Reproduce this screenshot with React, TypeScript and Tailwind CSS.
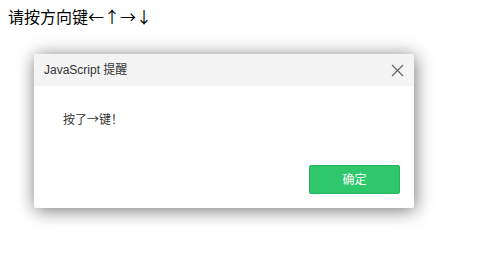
const App = () => {
    return (
        <div className="min-h-[266px] w-[485px] bg-white font-['Liberation_Sans','Noto_Sans_CJK_SC',sans-serif]">
            <div className="pl-2 pt-[6px] text-[16px] leading-[20px] text-black font-['Noto_Sans_CJK_SC',sans-serif]">
                请按方向键←↑→↓
            </div>
            <div className="ml-[34px] mt-[28px] w-[380px] h-[154px] rounded-[2px] bg-white shadow-[1px_2px_18px_rgba(0,0,0,0.55)] flex flex-col overflow-hidden">
                <header className="h-[32px] bg-[#f4f4f4] flex items-center justify-between pl-[10px] pr-[10px]">
                    <span className="text-[12px] text-[#333]">JavaScript 提醒</span>
                    <svg width="13" height="13" viewBox="0 0 13 13" className="text-[#666]">
                        <path d="M1 1L12 12M12 1L1 12" stroke="currentColor" strokeWidth="1.2" />
                    </svg>
                </header>
                <main className="flex-1 flex flex-col">
                    <p className="pl-[29px] pt-[25px] text-[12px] leading-[16px] text-[#333] font-['Noto_Sans_CJK_SC',sans-serif]">按了→键！</p>
                    <div className="mt-auto flex justify-end pr-[14px] pb-[14px]">
                        <button className="w-[91px] h-[29px] rounded-[2px] border border-[#22b35b] bg-[#30c86c] text-white text-[12px]">
                            确定
                        </button>
                    </div>
                </main>
            </div>
        </div>
    );
};

export default App;
